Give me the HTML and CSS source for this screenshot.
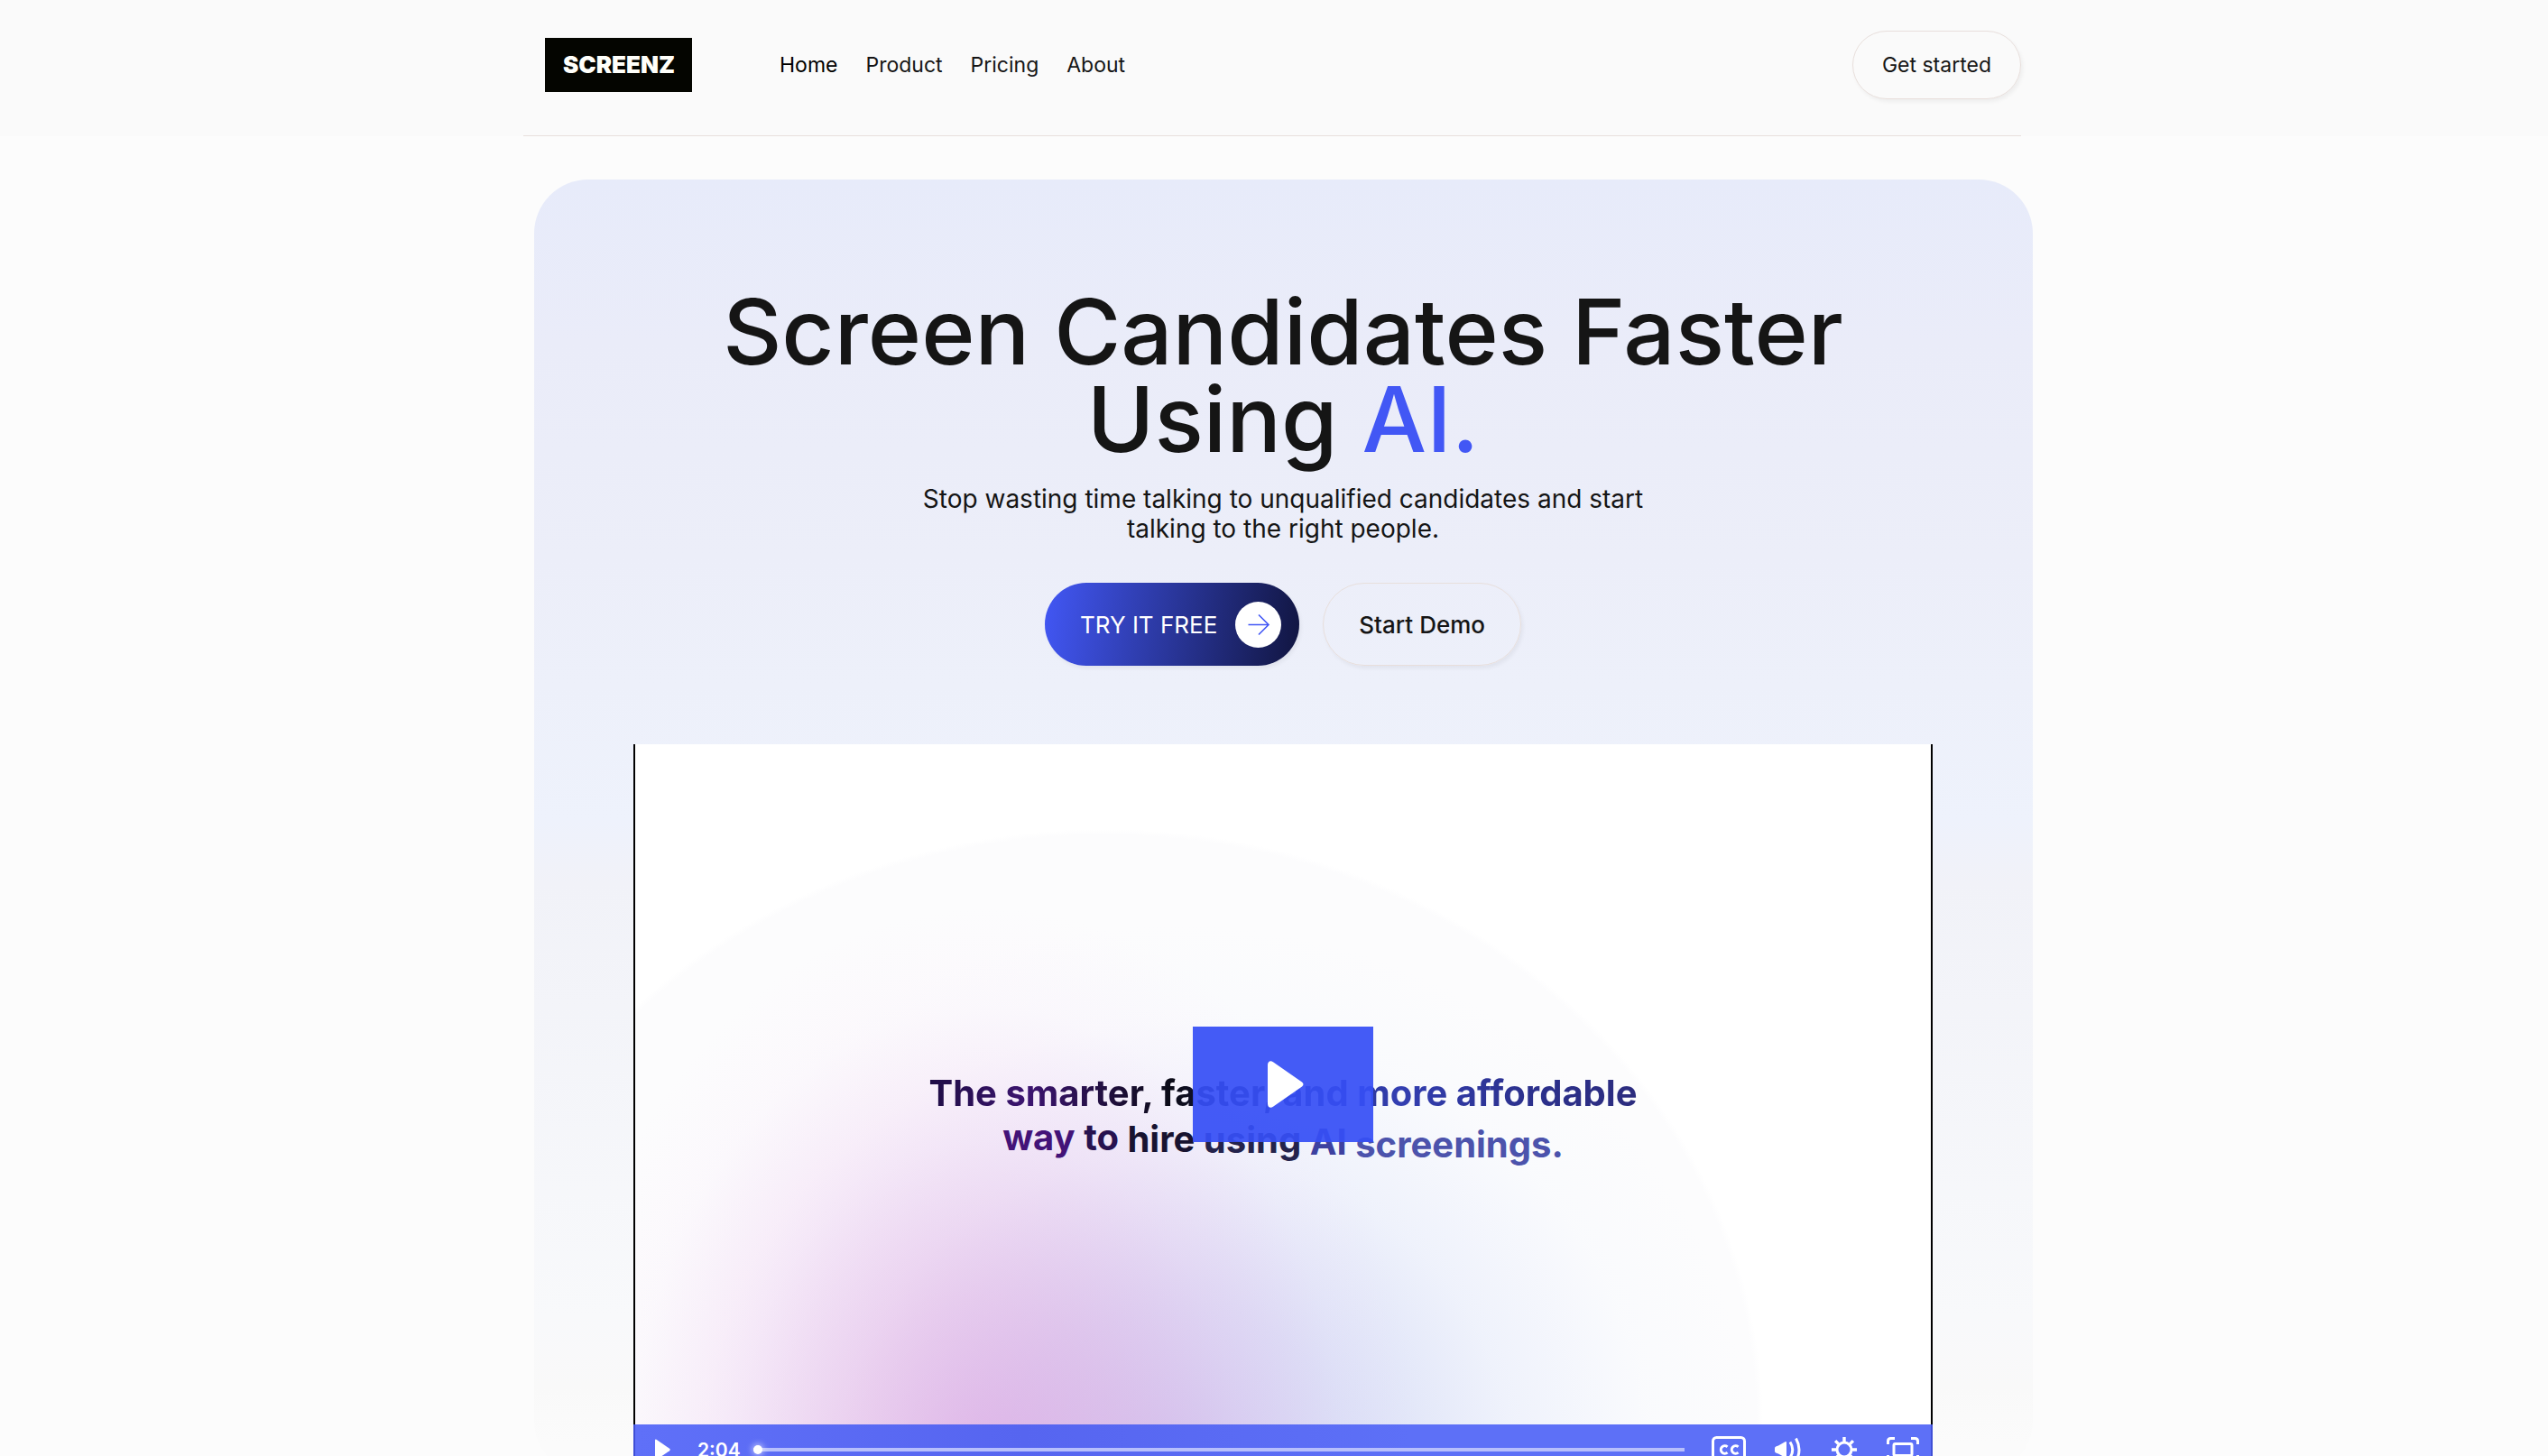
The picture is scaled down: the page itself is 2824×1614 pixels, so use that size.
FILE: index.html
```html
<!DOCTYPE html>
<html lang="en">
<head>
<meta charset="utf-8">
<meta name="viewport" content="width=device-width, initial-scale=1">
<title>Screenz</title>
<link rel="stylesheet" href="styles.css">
</head>
<body>
<header class="site-header">
  <div class="header-inner">
    <a class="logo" href="#" aria-label="Screenz">
      <svg class="logo-mark" viewBox="0 0 163 60" aria-hidden="true">
        <rect width="163" height="60" fill="#040500"/>
        <text class="logo-text" x="82" y="39" text-anchor="middle">SCREENZ</text>
      </svg>
    </a>
    <nav class="main-nav">
      <a class="nav-link nav-link-active" href="#">Home</a>
      <a class="nav-link" href="#">Product</a>
      <a class="nav-link" href="#">Pricing</a>
      <a class="nav-link" href="#">About</a>
    </nav>
    <a class="btn btn-small" href="#">Get started</a>
  </div>
</header>
<main>
  <section class="hero">
    <h1 class="hero-title">Screen Candidates Faster<br>Using <span class="accent">AI.</span></h1>
    <p class="hero-text">Stop wasting time talking to unqualified candidates and start talking to the right people.</p>
    <div class="hero-actions">
      <a class="btn btn-primary" href="#">TRY IT FREE
        <svg class="btn-arrow" viewBox="0 0 51 51" aria-hidden="true">
          <circle cx="25.500" cy="25.500" r="25.500" fill="#fff"/>
          <path d="M14.500 25.500H37M26 14.500L37 25.500L26 36.500" fill="none" stroke="#4257f5" stroke-width="1.600"/>
        </svg>
      </a>
      <a class="btn btn-outline" href="#">Start Demo</a>
    </div>
    <div class="video">
      <div class="video-frame">
        <p class="caption">
          <span class="caption-line caption-first">The smarter, faster, and more affordable</span>
          <span class="caption-line caption-second">
            <span class="word w1">way</span> <span class="word w2">to</span> <span class="word w3">hire</span> <span class="word w4">using</span> <span class="word w5">AI</span> <span class="word w6">screenings.</span>
          </span>
        </p>
        <button class="big-play" type="button" aria-label="Play video">
          <svg width="40" height="52" viewBox="0 0 40 52" aria-hidden="true"><path d="M0 4.500C0 .500 3 -1 6 1.200L38 23.500Q41 26 38 28.500L6 50.800C3 53 0 51.500 0 47.500Z" fill="#fff"/></svg>
        </button>
      </div>
      <div class="controls">
        <button class="control" type="button" aria-label="Play"><svg width="18" height="24" viewBox="0 0 18 24"><path d="M0 1.500Q0 0 1.500 .800L16 10.800Q17.500 12 16 13.200L1.500 23.200Q0 24 0 22.500Z" fill="#fff"/></svg></button>
        <span class="time">2:04</span>
        <input class="seek" type="range" min="0" max="124" value="0" aria-label="Seek">
        <button class="control" type="button" aria-label="Captions"><svg width="38" height="30" viewBox="0 0 38 30" fill="none" stroke="#fff" stroke-width="3"><rect x="1.500" y="1.500" width="35" height="27" rx="4"/><path d="M17.500 11.800A4.300 4.300 0 1 0 17.500 18.200M29.500 11.800A4.300 4.300 0 1 0 29.500 18.200"/></svg></button>
        <button class="control" type="button" aria-label="Volume"><svg width="30" height="28" viewBox="0 0 30 28"><path d="M0 12.500Q0 11 1.200 10.500L4 9.500L11.500 5.300Q13 4.500 13 6V22Q13 23.500 11.500 22.700L4 18.500L1.200 17.500Q0 17 0 15.500Z" fill="#fff"/><path d="M17 5.500Q22.500 14 17 22.500M23.500 1.500Q30.500 14 23.500 26.500" fill="none" stroke="#fff" stroke-width="3"/></svg></button>
        <button class="control" type="button" aria-label="Settings"><svg width="30" height="30" viewBox="0 0 30 30" fill="none" stroke="#fff"><circle cx="15" cy="15" r="8" stroke-width="3"/><path d="M15 1V6M15 24V29M1 15H6M24 15H29M5.100 5.100L8.600 8.600M21.400 21.400L24.900 24.900M5.100 24.900L8.600 21.400M21.400 8.600L24.900 5.100" stroke-width="3.400"/></svg></button>
        <button class="control" type="button" aria-label="Fullscreen"><svg width="36" height="28" viewBox="0 0 36 28" fill="none" stroke="#fff" stroke-width="3"><rect x="8" y="7.500" width="20" height="13" rx="1.500"/><path d="M1.500 8V4.500Q1.500 1.500 4.500 1.500H9M27 1.500H31.500Q34.500 1.500 34.500 4.500V8M1.500 20V23.500Q1.500 26.500 4.500 26.500H9M27 26.500H31.500Q34.500 26.500 34.500 23.500V20"/></svg></button>
      </div>
    </div>
  </section>
</main>
</body>
</html>
```
FILE: styles.css
```css
* { box-sizing: border-box; }

body {
  margin: 0;
  height: 100vh;
  overflow: hidden;
  background: #fcfcfc;
  color: #151515;
  font-family: Inter, "Liberation Sans", sans-serif;
  font-size: 23px;
}

a { color: inherit; text-decoration: none; }

button { font: inherit; border: 0; padding: 0; cursor: pointer; }

svg { display: block; }

.site-header { background: #fafafa; }

.header-inner {
  width: calc(100% - 48px);
  max-width: 1660px;
  margin: 0 auto;
  padding: 34px 0 40px 24px;
  display: flex;
  align-items: center;
  border-bottom: 1px solid #e8dfdc;
  position: relative;
  left: -2px;
}

.logo-mark { width: 163px; height: 60px; }

.logo-text {
  fill: #fffffa;
  font-size: 26px;
  font-weight: 900;
}

.main-nav { display: flex; gap: 31px; margin-left: 97px; }

.nav-link-active { color: #000; }

.btn {
  display: flex;
  align-items: center;
  border: 1px solid #e8dfdc;
  border-radius: 48px;
  box-shadow: 2px 3px 4px rgba(0, 0, 0, .05);
}

.btn-small { height: 76px; margin-left: auto; padding: 0 32px; border-radius: 38px; }

.hero {
  width: calc(100% - 48px);
  max-width: 1661px;
  margin: 48px auto 0;
  padding: 120px 24px 0;
  position: relative;
  left: 10px;
  display: flex;
  flex-direction: column;
  align-items: center;
  border-radius: 60px;
  background: linear-gradient(#e7ebfa 0, #eaecf9 180px, #eceef9 420px, #edf0fa 560px, #eef2fc 710px, #f1f2f8 780px, #f8f9fb 1260px, #f9f9f9 1340px, #fbfbfb 1400px);
}

.hero-title {
  margin: 0;
  font-size: 101px;
  line-height: 97px;
  font-weight: 500;
  text-align: center;
}

.accent { color: #4257f5; }

.hero-text {
  width: 100%;
  max-width: 860px;
  margin: 24px 0 43px;
  font-size: 28px;
  line-height: 33px;
  text-align: center;
}

.hero-actions { display: flex; gap: 26px; font-size: 26px; }

.btn-primary {
  height: 92px;
  gap: 20px;
  padding: 0 20px 0 39px;
  border: 0;
  color: #fff;
  background: linear-gradient(98deg, #4257f5, #111540);
}

.btn-arrow { width: 51px; height: 51px; }

.btn-outline { height: 92px; padding: 0 39px; font-weight: 500; }

.video { width: 100%; max-width: 1440px; margin-top: 87px; }

.video-frame {
  height: 754px;
  border: solid #000;
  border-width: 0 2px;
  display: grid;
  place-items: center;
  background:
    radial-gradient(ellipse 480px 620px at 390px 800px, rgba(224, 138, 216, .5), rgba(228, 155, 220, .4) 30%, rgba(236, 175, 230, .23) 58%, rgba(246, 205, 243, .08) 82%, rgba(250, 220, 248, 0)),
    radial-gradient(ellipse 640px 600px at 600px 800px, rgba(160, 165, 232, .52), rgba(172, 184, 238, .42) 30%, rgba(205, 216, 248, .28) 58%, rgba(240, 245, 255, .2) 82%, rgba(250, 250, 255, 0)),
    radial-gradient(ellipse 730px 660px at 520px 754px, #fcfcfd 99%, #fff);
}

.caption, .big-play { grid-area: 1 / 1; }

.caption {
  margin: 68px 0 0;
  font-size: 40px;
  line-height: 49px;
  font-weight: 700;
  text-align: center;
}

.caption-line { display: block; color: transparent; background-clip: text; }

.caption-first {
  background-image: linear-gradient(90deg, #1f0d45, #3c1470 14%, #0b0b17 34%, #22235c 50%, #333fb2 66%, #2c318e 84%, #2c2c7e);
}

.word { display: inline-block; color: #4c53ac; }
.w1 { color: #431378; }
.w2 { color: #27124f; }
.w3 { color: #181330; transform: translateY(2px); }
.w4 { color: #24234c; transform: translateY(3px); }
.w5 { color: #3d41a0; transform: translateY(5px); }
.w6 { transform: translateY(8px); }

.big-play {
  width: 200px;
  height: 128px;
  padding-left: 5px;
  display: grid;
  place-items: center;
  z-index: 1;
  background: rgba(54, 79, 245, .93);
}

.controls {
  height: 56px;
  padding: 0 13px 0 22px;
  border: solid #3f4fd6;
  border-width: 0 2px;
  display: flex;
  align-items: center;
  gap: 32px;
  color: #fff;
  background: linear-gradient(90deg, #5f70f8, #5665f0 30%, #5d70f7 60%);
}

.control { background: none; }

.time { margin-left: -3px; font-size: 21px; font-weight: 600; }

.seek {
  flex: 1;
  height: 20px;
  margin: 0 -2px 0 -18px;
  appearance: none;
  background: linear-gradient(#b7bffc, #b7bffc) center / 100% 4px no-repeat;
}

.seek::-webkit-slider-thumb {
  appearance: none;
  width: 10px;
  height: 10px;
  border-radius: 50%;
  background: #fff;
  box-shadow: 0 0 6px 2px rgba(255, 255, 255, .5);
}
```
